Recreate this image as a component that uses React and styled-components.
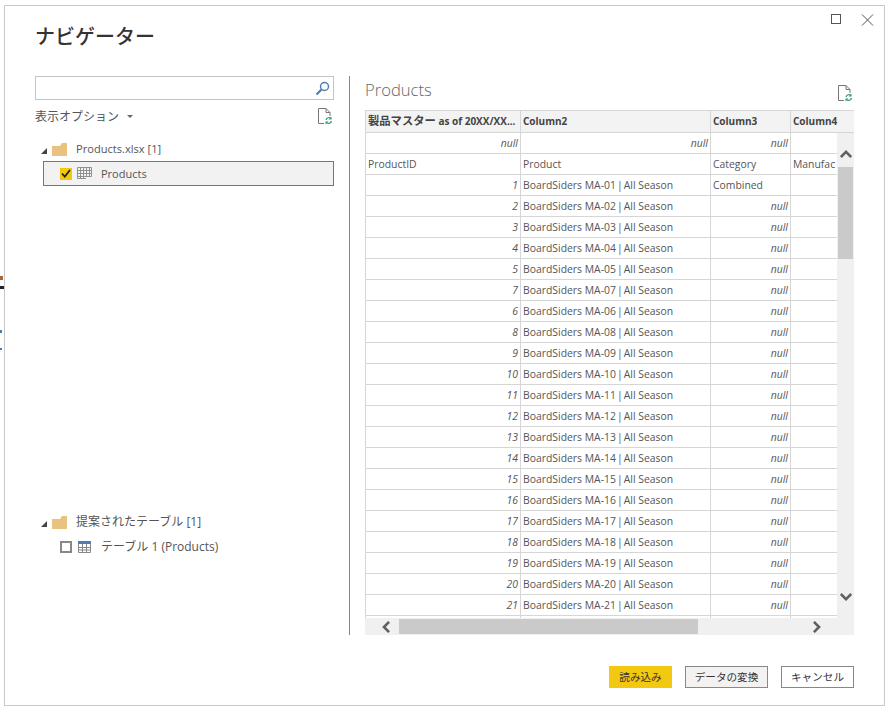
import React from "react";
import styled, { createGlobalStyle } from "styled-components";

const Global = createGlobalStyle`
  html, body { margin: 0; padding: 0; background: #fff; }
  body { font-family: "Open Sans", "Noto Sans CJK JP", sans-serif; color: #444; }
`;

const JP = `"Noto Sans CJK JP", "Open Sans", sans-serif`;

const Page = styled.div`
  position: relative;
  width: 890px;
  height: 718px;
  padding: 5px 5px 12px 4px;
  box-sizing: border-box;
  overflow: hidden;
`;
const Ghost = styled.i`
  position: absolute;
  left: 0;
  width: ${(p) => p.$w}px;
  height: ${(p) => p.$h}px;
  top: ${(p) => p.$top}px;
  background: ${(p) => p.$c};
`;
const Dialog = styled.div`
  box-sizing: border-box;
  width: 881px;
  height: 701px;
  border: 1px solid #c9c9c9;
  background: #fff;
  display: flex;
  flex-direction: column;
  padding: 0 30px 17px 30px;
`;
const WindowBar = styled.div`
  height: 19px;
  margin-right: -20px;
  padding-top: 8px;
  display: flex;
  flex: none;
  justify-content: flex-end;
  gap: 19px;
  box-sizing: content-box;
  align-items: flex-start;
`;
const Title = styled.h1`
  margin: -9px 0 0 0;
  font: 500 20px/24px ${JP};
  color: #333;
  height: 40px;
  flex: none;
  letter-spacing: 0;
`;
const Main = styled.div`
  display: flex;
  flex: none;
  height: 559px;
  margin-top: 12px;
`;
const LeftPane = styled.div`
  width: 299px;
  display: flex;
  flex-direction: column;
`;
const Divider = styled.div`
  width: 1px;
  background: #888;
  margin: 0 15px;
`;
const RightPane = styled.div`
  width: 489px;
  display: flex;
  flex-direction: column;
`;
const SearchBox = styled.div`
  box-sizing: border-box;
  height: 24px;
  flex: none;
  border: 1px solid #c4c4c4;
  display: flex;
  align-items: center;
  justify-content: flex-end;
  padding-right: 3px;
`;
const OptionsRow = styled.div`
  display: flex;
  flex: none;
  justify-content: space-between;
  align-items: flex-start;
  margin-top: 8px;
  height: 29px;
  padding-right: 1px;
`;
const Options = styled.div`
  font: 400 12px/16px ${JP};
  color: #555;
  display: flex;
  align-items: center;
  gap: 8px;
`;
const Caret = styled.span`
  width: 0;
  height: 0;
  border-left: 3px solid transparent;
  border-right: 3px solid transparent;
  border-top: 3px solid #666;
`;
const Spacer = styled.div`
  flex: 1;
`;
const TreeHead = styled.div`
  display: flex;
  flex: none;
  align-items: center;
  height: 24px;
  padding-left: 6px;
  font: 400 ${(p) => p.$size}px/24px "Open Sans", ${JP};
  color: #555;
`;
const Triangle = styled.span`
  width: 0;
  height: 0;
  margin-right: 5px;
  margin-top: 3px;
  border-style: solid;
  border-width: 0 0 6px 6px;
  border-color: transparent transparent #444 transparent;
`;
const FolderWrap = styled.span`
  display: inline-flex;
  margin-right: 9px;
`;
const TreeItem = styled.div`
  box-sizing: border-box;
  height: 25px;
  flex: none;
  margin-left: 8px;
  display: flex;
  align-items: center;
  padding-left: 16px;
  font: 400 ${(p) => p.$size}px/23px "Open Sans", ${JP};
  color: #555;
  border: 1px solid ${(p) => (p.$selected ? "#767676" : "transparent")};
  background: ${(p) => (p.$selected ? "#f2f2f2" : "transparent")};
`;
const Check = styled.span`
  box-sizing: border-box;
  width: 12px;
  height: 12px;
  margin-right: 5px;
  display: inline-flex;
  align-items: center;
  justify-content: center;
  background: ${(p) => (p.$on ? "#f2c811" : "#fff")};
  border: ${(p) => (p.$on ? "none" : "2px solid #888")};
`;
const ItemLabel = styled.span`
  margin-left: 9px;
`;
const PaneHead = styled.div`
  height: 34px;
  flex: none;
  display: flex;
  justify-content: space-between;
  align-items: flex-start;
  padding: 0 1px 0 0;
`;
const PaneTitle = styled.div`
  font: 300 16.6px/26px "Open Sans", sans-serif;
  color: #666;
  margin-top: 1px;
`;
const RefreshWrap = styled.span`
  margin-top: 9px;
  display: inline-flex;
`;
const Grid = styled.div`
  display: flex;
  flex-direction: column;
  flex: 1;
  min-height: 0;
  font: 400 10.4px/20px "Open Sans", ${JP};
  color: #555;
`;
const Cols = "155px 190px 80px 1fr";
const HeaderRow = styled.div`
  display: grid;
  grid-template-columns: ${Cols};
  height: 23px;
  box-sizing: border-box;
  background: #f3f3f3;
  border-top: 1px solid #d6d6d6;
  border-bottom: 1px solid #d6d6d6;
  border-left: 1px solid #d6d6d6;
  flex: none;
`;
const HeaderCell = styled.div`
  padding-left: 2px;
  font-size: 10px;
  font-weight: 700;
  line-height: 20px;
  white-space: nowrap;
  overflow: hidden;
  border-right: ${(p) => (p.$last ? "none" : "1px solid #d6d6d6")};
  color: #444;
`;
const HeaderJP = styled.span`
  font-size: 11.3px;
`;
const Middle = styled.div`
  flex: 1;
  min-height: 0;
  display: flex;
`;
const Rows = styled.div`
  flex: 1;
  min-width: 0;
  overflow: hidden;
`;
const Row = styled.div`
  display: grid;
  grid-template-columns: ${Cols};
  height: 21px;
  box-sizing: border-box;
  border-bottom: 1px solid #d6d6d6;
  border-left: 1px solid #d6d6d6;
`;
const Cell = styled.div`
  padding: 0 2px;
  height: 20px;
  white-space: nowrap;
  overflow: hidden;
  text-align: ${(p) => (p.$num ? "right" : "left")};
  font-style: ${(p) => (p.$num ? "italic" : "normal")};
  border-right: ${(p) => (p.$last ? "none" : "1px solid #d6d6d6")};
`;
const VScroll = styled.div`
  width: 17px;
  background: #f0f0f0;
  display: flex;
  flex-direction: column;
  align-items: center;
  flex: none;
`;
const VArrowUp = styled.div`
  height: 34px;
  display: flex;
  align-items: flex-end;
  justify-content: center;
  padding-bottom: 8px;
  box-sizing: border-box;
  flex: none;
`;
const VArrowDown = styled.div`
  height: 26px;
  display: flex;
  align-items: flex-start;
  justify-content: center;
  box-sizing: border-box;
  flex: none;
`;
const VThumb = styled.div`
  width: 15px;
  height: 92px;
  background: #cacaca;
  flex: none;
`;
const HScroll = styled.div`
  height: 17px;
  background: #f0f0f0;
  display: flex;
  align-items: center;
  flex: none;
`;
const HArrow = styled.div`
  width: 34px;
  box-sizing: border-box;
  padding-left: ${(p) => p.$inset || 0}px;
  display: flex;
  justify-content: center;
  flex: none;
`;
const HThumb = styled.div`
  width: 299px;
  height: 15px;
  background: #cacaca;
  flex: none;
`;
const HEnd = styled.div`
  width: 21px;
  flex: none;
`;
const Footer = styled.div`
  display: flex;
  flex: none;
  justify-content: flex-end;
  gap: 13px;
  margin-top: 31px;
`;
const Button = styled.button`
  box-sizing: border-box;
  height: 22px;
  width: ${(p) => p.$w}px;
  padding: 0;
  font: 400 10.6px/20px ${JP};
  color: #333;
  background: ${(p) => (p.$primary ? "#f2c811" : p.$grey ? "#f3f2f1" : "#fff")};
  border: 1px solid ${(p) => (p.$primary ? "#f2c811" : "#8a8886")};
`;
const BottomGap = styled.div`
  height: 76px;
  flex: none;
`;
const IconRow = styled.span`
  display: inline-flex;
`;

const Maximize = () => (
  <svg width="11" height="11" viewBox="0 0 11 11"><rect x="0.5" y="0.5" width="9" height="9" fill="none" stroke="#555" /></svg>
);
const Close = () => (
  <svg width="13" height="13" viewBox="0 0 13 13"><path d="M1 .5 12 11.5M12 .5 1 11.5" stroke="#555" fill="none" /></svg>
);
const Search = () => (
  <svg width="15" height="15" viewBox="0 0 15 15">
    <circle cx="9.5" cy="5.5" r="4" fill="none" stroke="#4d7fb5" strokeWidth="1.5" />
    <path d="M6.5 8.5 1.5 13.5" stroke="#4d7fb5" strokeWidth="2.2" fill="none" />
  </svg>
);
const RefreshDoc = () => (
  <svg width="16" height="17" viewBox="0 0 16 17">
    <path d="M9 .5H1.5V15.5H7M9 .5 13 4.5V8M9 .5V4.5H13" fill="none" stroke="#777" />
    <path d="M9 12a3 3 0 0 1 5-1.5M14.5 13a3 3 0 0 1-5 1.5" fill="none" stroke="#3e9b6e" strokeWidth="1.2" />
    <path d="M14.5 8.5V11.5H11.5ZM8.5 16.5V13.5H11.5Z" fill="#3e9b6e" />
  </svg>
);
const Folder = () => (
  <svg width="15" height="13" viewBox="0 0 15 13">
    <path d="M0 3 8 3 10 0H15V13H0Z" fill="#e8c27e" />
  </svg>
);
const TableGrey = () => (
  <svg width="15" height="13" viewBox="0 0 15 13">
    <path d="M.5.5H14.5V9.5M.5.5V11.5H9M.5 3.5H14.5M.5 6.5H14.5M.5 9.5H14.5M3.5.5V11.5M6.5.5V11.5M9.5.5V9.5M12.5.5V9.5" fill="none" stroke="#888" strokeWidth="0.9" />
  </svg>
);
const TableBlue = () => (
  <svg width="15" height="12" viewBox="-1 0 15 12">
    <rect x="0" y="0" width="13" height="3" fill="#4d7fb5" />
    <path d="M.5 3V11.5H12.5V3M.5 6.5H12.5M.5 9H12.5M4.5 3V11.5M8.5 3V11.5" fill="none" stroke="#888" />
  </svg>
);
const Tick = () => (
  <svg width="10" height="9" viewBox="0 0 10 9"><path d="M1 4.5 3.8 7.5 9 1" fill="none" stroke="#222" strokeWidth="1.8" /></svg>
);
const Chevron = ({ dir }) => {
  const d = {
    up: "M1 8 7 2 13 8",
    down: "M1 2 7 8 13 2",
    left: "M8 1 2 7 8 13",
    right: "M2 1 8 7 2 13",
  }[dir];
  const box = dir === "up" || dir === "down" ? "0 0 14 10" : "0 0 10 14";
  const w = dir === "up" || dir === "down" ? 12 : 9;
  const h = dir === "up" || dir === "down" ? 9 : 12;
  return (
    <svg width={w} height={h} viewBox={box}>
      <path d={d} fill="none" stroke="#606060" strokeWidth="3" />
    </svg>
  );
};

const ids = [1, 2, 3, 4, 5, 7, 6, 8, 9, 10, 11, 12, 13, 14, 15, 16, 17, 18, 19, 20, 21];
const pad = (n) => String(n).padStart(2, "0");

export default function App() {
  return (
    <Page>
      <Global />
      <Ghost $top={276} $w={3} $h={4} $c="#a8683a" />
      <Ghost $top={286} $w={4} $h={3} $c="#222" />
      <Ghost $top={330} $w={2} $h={3} $c="#4a7ab0" />
      <Ghost $top={348} $w={2} $h={2} $c="#4a7ab0" />
      <Dialog>
        <WindowBar>
          <IconRow><Maximize /></IconRow>
          <IconRow><Close /></IconRow>
        </WindowBar>
        <Title>ナビゲーター</Title>
        <Main>
          <LeftPane>
            <SearchBox><Search /></SearchBox>
            <OptionsRow>
              <Options>表示オプション<Caret /></Options>
              <RefreshDoc />
            </OptionsRow>
            <TreeHead $size={11.1}>
              <Triangle />
              <FolderWrap><Folder /></FolderWrap>
              Products.xlsx [1]
            </TreeHead>
            <TreeItem $selected $size={11}>
              <Check $on><Tick /></Check>
              <TableGrey />
              <ItemLabel>Products</ItemLabel>
            </TreeItem>
            <Spacer />
            <TreeHead $size={12}>
              <Triangle />
              <FolderWrap><Folder /></FolderWrap>
              提案されたテーブル [1]
            </TreeHead>
            <TreeItem $size={12}>
              <Check />
              <TableBlue />
              <ItemLabel>テーブル 1 (Products)</ItemLabel>
            </TreeItem>
            <BottomGap />
          </LeftPane>
          <Divider />
          <RightPane>
            <PaneHead>
              <PaneTitle>Products</PaneTitle>
              <RefreshWrap><RefreshDoc /></RefreshWrap>
            </PaneHead>
            <Grid>
              <HeaderRow>
                <HeaderCell><HeaderJP>製品マスター</HeaderJP> as of 20XX/XX...</HeaderCell>
                <HeaderCell>Column2</HeaderCell>
                <HeaderCell>Column3</HeaderCell>
                <HeaderCell $last>Column4</HeaderCell>
              </HeaderRow>
              <Middle>
                <Rows>
                  <Row>
                    <Cell $num>null</Cell>
                    <Cell $num>null</Cell>
                    <Cell $num>null</Cell>
                    <Cell $last />
                  </Row>
                  <Row>
                    <Cell>ProductID</Cell>
                    <Cell>Product</Cell>
                    <Cell>Category</Cell>
                    <Cell $last>Manufac</Cell>
                  </Row>
                  {ids.map((n, i) => (
                    <Row key={n}>
                      <Cell $num>{n}</Cell>
                      <Cell>BoardSiders MA-{pad(n)}{"\u200a|\u200a"}All Season</Cell>
                      {i === 0 ? <Cell>Combined</Cell> : <Cell $num>null</Cell>}
                      <Cell $last />
                    </Row>
                  ))}
                  <Row>
                    <Cell /><Cell /><Cell /><Cell $last />
                  </Row>
                </Rows>
                <VScroll>
                  <VArrowUp><Chevron dir="up" /></VArrowUp>
                  <VThumb />
                  <Spacer />
                  <VArrowDown><Chevron dir="down" /></VArrowDown>
                </VScroll>
              </Middle>
              <HScroll>
                <HArrow $inset={8}><Chevron dir="left" /></HArrow>
                <HThumb />
                <Spacer />
                <HArrow><Chevron dir="right" /></HArrow>
                <HEnd />
              </HScroll>
            </Grid>
          </RightPane>
        </Main>
        <Footer>
          <Button $primary $w={63}>読み込み</Button>
          <Button $grey $w={83}>データの変換</Button>
          <Button $w={73}>キャンセル</Button>
        </Footer>
      </Dialog>
    </Page>
  );
}
